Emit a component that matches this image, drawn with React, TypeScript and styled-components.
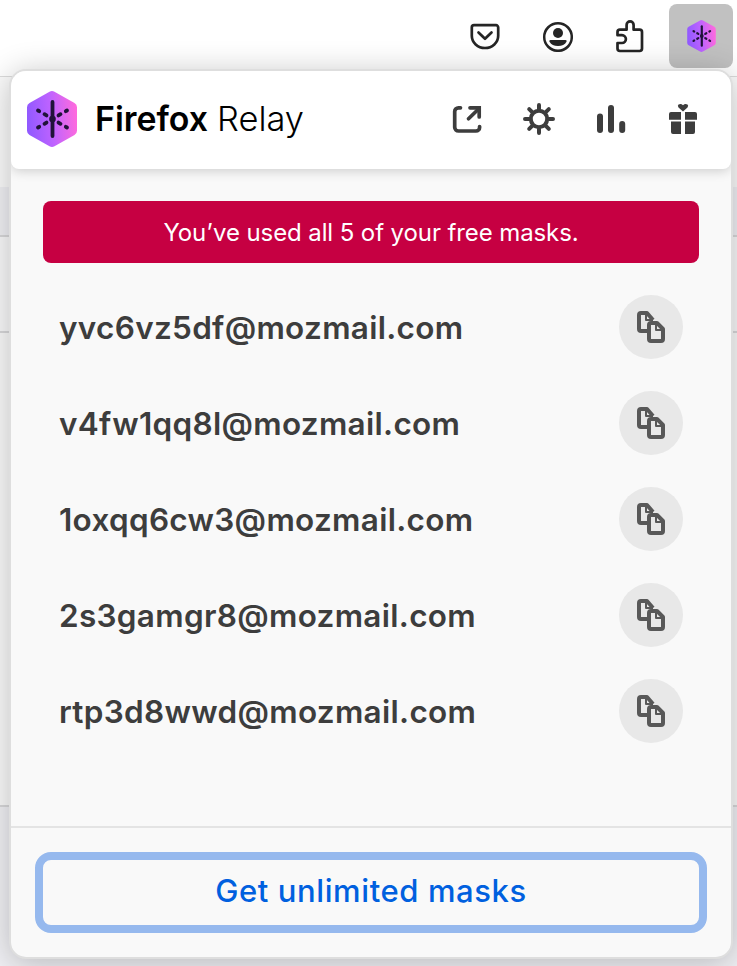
import React from "react";
import styled, { createGlobalStyle } from "styled-components";

const Global = createGlobalStyle`
  * { box-sizing: border-box; }
  body { margin: 0; background: #f0f0f2; font-family: Inter, "Liberation Sans", sans-serif; }
`;

const Screen = styled.div`
  position: relative;
  width: 737px;
  height: 966px;
  overflow: hidden;
  display: flex;
  flex-direction: column;
`;

const Toolbar = styled.div`
  height: 77px;
  flex: none;
  display: flex;
  justify-content: flex-end;
  gap: 8px;
  padding: 4px 4px 0 0;
  background: #fff;
  border-bottom: 1px solid #dcdcdc;
`;

const ToolButton = styled.div<{ $active?: boolean }>`
  width: 64px;
  height: 64px;
  display: grid;
  place-items: center;
  border-radius: 8px;
  background: ${(p) => (p.$active ? "#c1c1c1" : "transparent")};
`;

const Band = styled.div<{ $h: number; $bg: string; $line?: boolean }>`
  flex: none;
  height: ${(p) => p.$h}px;
  background: ${(p) => p.$bg};
  border-bottom: ${(p) => (p.$line ? "2px solid #d8d8da" : "0")};
`;

const Panel = styled.main`
  position: absolute;
  left: 9px;
  top: 69px;
  width: 724px;
  height: 890px;
  display: flex;
  flex-direction: column;
  background: #f9f9f9;
  background-clip: padding-box;
  border: 2px solid #dedede;
  border-radius: 17px;
  overflow: hidden;
  box-shadow: 0 4px 32px rgba(0, 0, 0, 0.24);
`;

const Header = styled.header`
  height: 98px;
  flex: none;
  display: flex;
  align-items: center;
  justify-content: space-between;
  padding: 0 32px 2px 16px;
  background: #fff;
  border-radius: 0 0 8px 8px;
  box-shadow: 0 2px 12px rgba(0, 0, 0, 0.18);
`;

const Brand = styled.div`
  display: flex;
  align-items: center;
  gap: 18px;
`;

const Actions = styled.nav`
  display: flex;
  gap: 40px;
`;

const Body = styled.section`
  flex: 1;
  padding: 32px 32px 0;
`;

const Banner = styled.div`
  height: 62px;
  display: grid;
  place-items: center;
  border-radius: 8px;
  background: #c60042;
  color: #fff;
  font-size: 24px;
  letter-spacing: -0.1px;
`;

const MaskList = styled.ul`
  list-style: none;
  margin: 16px 0 0;
  padding: 0 16px;
`;

const MaskRow = styled.li`
  height: 96px;
  display: flex;
  align-items: center;
  justify-content: space-between;
  color: #3d3d3d;
  font-size: 31.500px;
  font-weight: 600;
  letter-spacing: 0.3px;
`;

const CopyButton = styled.button`
  width: 64px;
  height: 64px;
  display: grid;
  place-items: center;
  padding: 0;
  border: 0;
  border-radius: 50%;
  background: #e8e8e8;
`;

const Footer = styled.footer`
  flex: none;
  height: 131px;
  padding: 24px;
  border-top: 2px solid #e4e4e4;
`;

const UpgradeButton = styled.button`
  display: block;
  width: 672px;
  height: 81px;
  padding: 0 0 4px;
  border: 8px solid #96b9ee;
  border-radius: 16px;
  background: #f9f9f9;
  color: #0060df;
  font-family: Inter, "Liberation Sans", sans-serif;
  font-size: 31px;
  font-weight: 500;
  letter-spacing: 0.6px;
`;

const RelayMark = ({ width, height, id }: { width: number; height: number; id: string }) => (
  <svg width={width} height={height} viewBox="0 0 50 56">
    <defs>
      <linearGradient id={id} x1="0" y1="0.55" x2="1" y2="0.45">
        <stop offset="0" stopColor="#9059ff" />
        <stop offset="0.5" stopColor="#bf63ff" />
        <stop offset="1" stopColor="#ff6bdd" />
      </linearGradient>
    </defs>
    <path
      d="M22.5.7q2.5-1.4 5 0l20 11.2q2.5 1.5 2.5 4.3v23.6q0 2.8-2.5 4.3l-20 11.2q-2.5 1.4-5 0l-20-11.2Q0 42.600 0 39.800V16.200q0-2.800 2.500-4.300z"
      fill={`url(#${id})`}
    />
    <g stroke="#20123a" strokeWidth="3.800" strokeLinecap="round">
      <path d="M25.500 11v34" />
      <path d="M11 19.500l1.200.7M17.500 23.200l2 1.200M40 19.500l-1.200.7M33.500 23.200l-2 1.200M11 36.500l1.200-.7M17.500 32.800l2-1.200M40 36.500l-1.200-.7M33.500 32.800l-2-1.200" />
    </g>
    <circle cx="25.500" cy="28" r="3.300" fill="#20123a" />
  </svg>
);

const Wordmark = () => (
  <svg width="212" height="50" viewBox="0 0 212 50" fontFamily='Inter, "Liberation Sans", sans-serif' fontSize="34">
    <text x="0" y="37" fontWeight="600" textLength="113" lengthAdjust="spacingAndGlyphs">Firefox</text>
    <text x="122" y="37" fontWeight="300" textLength="87" lengthAdjust="spacingAndGlyphs">Relay</text>
  </svg>
);

const PocketIcon = () => (
  <svg width="32" height="32" viewBox="0 0 32 32" fill="none" stroke="#252525" strokeWidth="2.700" strokeLinecap="round" strokeLinejoin="round">
    <path d="M5 5.200h22a2.200 2.200 0 0 1 2.200 2.200v8.400a13.200 12.200 0 0 1-26.400 0V7.400A2.200 2.200 0 0 1 5 5.200z" />
    <path d="M9.500 12.500l6.500 6.300 6.500-6.300" />
  </svg>
);

const AccountIcon = () => (
  <svg width="32" height="32" viewBox="0 0 32 32" fill="#252525">
    <circle cx="17" cy="17" r="13.800" fill="none" stroke="#252525" strokeWidth="2.500" />
    <circle cx="17" cy="13" r="5" />
    <path d="M9.500 20h15q1.800 0 1 1.700Q23 26 17 26t-8.500-4.300Q7.700 20 9.500 20z" />
  </svg>
);

const PuzzleIcon = () => (
  <svg width="32" height="36" viewBox="0 0 32 36" fill="none" stroke="#252525" strokeWidth="2.700" strokeLinejoin="round">
    <path d="M6.900 11.700h6.700V6.900a3.500 3.500 0 0 1 7 0v4.800h6a2.400 2.400 0 0 1 2.400 2.400v16.500a2.400 2.400 0 0 1-2.400 2.400H6.900a2.400 2.400 0 0 1-2.400-2.400v-5.600h4.500a3.900 3.900 0 0 0 0-7.800H4.500v-3.100a2.400 2.400 0 0 1 2.400-2.400z" />
  </svg>
);

const OpenIcon = () => (
  <svg width="32" height="32" viewBox="0 0 32 32" fill="none" stroke="#3d3d3d" strokeWidth="3.700" strokeLinecap="round">
    <path d="M9.500 4.800H7.500a3.800 3.800 0 0 0-3.800 3.800v15.600a3.800 3.800 0 0 0 3.800 3.800h17.500a3.600 3.600 0 0 0 3.600-3.600V23.500" />
    <path d="M17.500 15.800L26 7.500" />
    <path d="M19 4.800h9.200v9.200" strokeLinejoin="miter" />
  </svg>
);

const GearIcon = () => (
  <svg width="32" height="32" viewBox="0 0 32 32" fill="none" stroke="#3d3d3d" strokeWidth="4" strokeLinecap="round">
    <circle cx="16" cy="16" r="8.200" />
    <path d="M16 2v4M16 26v4M2 16h4M26 16h4M6.200 6.200l3 3M22.800 22.800l3 3M6.200 25.800l3-3M22.800 9.200l3-3" />
  </svg>
);

const StatsIcon = () => (
  <svg width="32" height="32" viewBox="0 0 32 32" fill="#3d3d3d">
    <rect x="2" y="10.500" width="6" height="19.500" rx="3" />
    <rect x="13" y="2" width="6" height="28" rx="3" />
    <rect x="24.200" y="18" width="6" height="12" rx="3" />
  </svg>
);

const GiftIcon = () => (
  <svg width="32" height="32" viewBox="0 0 32 32" fill="#3d3d3d">
    <path d="M4 9h10v7.700H2V11a2 2 0 0 1 2-2zM18 9h10a2 2 0 0 1 2 2v5.700H18zM4 18.500h10V31H6a2 2 0 0 1-2-2zM18 18.500h10V29a2 2 0 0 1-2 2h-8z" />
    <path d="M16 8.500l-4.500-4q-1.300-1.800 0-3 2.400-1.500 4.500.8 2.100-2.300 4.500-.8 1.300 1.200 0 3z" />
  </svg>
);

const CopyIcon = () => (
  <svg width="28" height="32" viewBox="0 0 28 32" fill="none" stroke="#585858" strokeWidth="4" strokeLinejoin="round">
    <path d="M10 20H4a2 2 0 0 1-2-2V4a2 2 0 0 1 2-2h6l6 7" />
    <path d="M9 3v6h7" strokeWidth="2" />
    <path d="M14 12h6l6 6v10a2 2 0 0 1-2 2H14a2 2 0 0 1-2-2V14a2 2 0 0 1 2-2z" />
    <path d="M19 13v6h6" strokeWidth="2" />
  </svg>
);

const masks = [
  "yvc6vz5df@mozmail.com",
  "v4fw1qq8l@mozmail.com",
  "1oxqq6cw3@mozmail.com",
  "2s3gamgr8@mozmail.com",
  "rtp3d8wwd@mozmail.com",
];

export default function App() {
  return (
    <>
      <Global />
      <Screen>
        <Toolbar>
          <ToolButton><PocketIcon /></ToolButton>
          <ToolButton><AccountIcon /></ToolButton>
          <ToolButton><PuzzleIcon /></ToolButton>
          <ToolButton $active><RelayMark width={29} height={32} id="relay-small" /></ToolButton>
        </Toolbar>
        <Band $h={110} $bg="#fbfbfb" />
        <Band $h={50} $bg="#f0f0f4" $line />
        <Band $h={96} $bg="#f9f9fa" $line />
        <Band $h={474} $bg="#fafafa" $line />
        <Band $h={159} $bg="#f0f0f4" />
        <Panel>
          <Header>
            <Brand>
              <RelayMark width={50} height={56} id="relay-large" />
              <Wordmark />
            </Brand>
            <Actions>
              <OpenIcon />
              <GearIcon />
              <StatsIcon />
              <GiftIcon />
            </Actions>
          </Header>
          <Body>
            <Banner>You’ve used all 5 of your free masks.</Banner>
            <MaskList>
              {masks.map((mask) => (
                <MaskRow key={mask}>
                  <span>{mask}</span>
                  <CopyButton aria-label="Copy"><CopyIcon /></CopyButton>
                </MaskRow>
              ))}
            </MaskList>
          </Body>
          <Footer>
            <UpgradeButton>Get unlimited masks</UpgradeButton>
          </Footer>
        </Panel>
      </Screen>
    </>
  );
}
